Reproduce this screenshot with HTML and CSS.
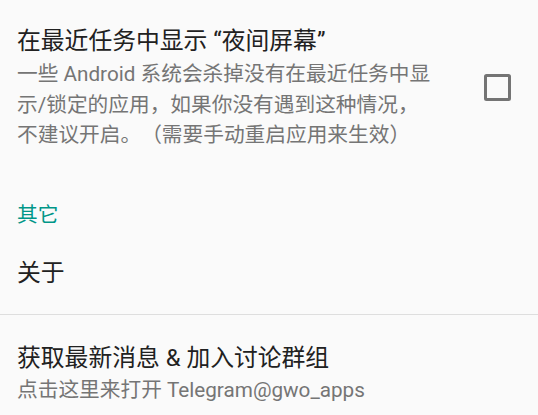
FILE: index.html
```html
<!DOCTYPE html>
<html lang="zh-CN">
<head>
<meta charset="utf-8">
<link rel="stylesheet" href="styles.css">
</head>
<body>
<div class="screen">
  <div class="pref pref-first">
    <div class="pref-text">
      <div class="pref-title">在最近任务中显示 “夜间屏幕”</div>
      <div class="pref-summary">一些 Android 系统会杀掉没有在最近任务中显示/锁定的应用，如果你没有遇到这种情况，不建议开启。（需要手动重启应用来生效）</div>
    </div>
    <div class="pref-widget"><span class="checkbox"></span></div>
  </div>
  <div class="category">其它</div>
  <div class="pref pref-about">
    <div class="pref-text">
      <div class="pref-title">关于</div>
    </div>
  </div>
  <div class="divider"></div>
  <div class="pref pref-last">
    <div class="pref-text">
      <div class="pref-title">获取最新消息 &amp; 加入讨论群组</div>
      <div class="pref-summary">点击这里来打开 Telegram@gwo_apps</div>
    </div>
  </div>
</div>
</body>
</html>
```
FILE: styles.css
```css
html, body {
  margin: 0;
  padding: 0;
  background: #fafafa;
}
body {
  font-family: Roboto, "Noto Sans CJK SC", sans-serif;
  overflow: hidden;
  text-spacing-trim: space-all;
}
.screen {
  width: 538px;
  height: 415px;
  overflow: hidden;
  background: #fafafa;
}
.pref {
  display: flex;
  align-items: center;
  padding-left: 17px;
  padding-right: 27px;
}
.pref-text {
  flex: 1;
  min-width: 0;
}
.pref-title {
  font-size: 23.8px;
  line-height: 32px;
  color: #212121;
}
.pref-summary {
  font-size: 20.7px;
  line-height: 30.5px;
  color: #757575;
  margin-top: 2px;
  text-spacing-trim: space-all;
}
.pref-first {
  padding-top: 25px;
  padding-bottom: 22px;
}
.pref-first .pref-text {
  max-width: 418px;
}
.pref-widget {
  width: 27px;
  margin-left: auto;
  display: flex;
  align-items: center;
  justify-content: center;
}
.checkbox {
  display: block;
  width: 27px;
  height: 27px;
  box-sizing: border-box;
  border: 3.2px solid #747474;
  border-radius: 2.5px;
}
.category {
  padding: 27.5px 17px 0;
  font-size: 20.7px;
  line-height: 30px;
  color: #009688;
}
.pref-about {
  padding-top: 27px;
  padding-bottom: 25px;
}
.divider {
  height: 1px;
  background: #dedede;
}
.pref-last {
  padding-top: 27px;
}
.pref-last .pref-summary {
  margin-top: 0.75px;
}
```
